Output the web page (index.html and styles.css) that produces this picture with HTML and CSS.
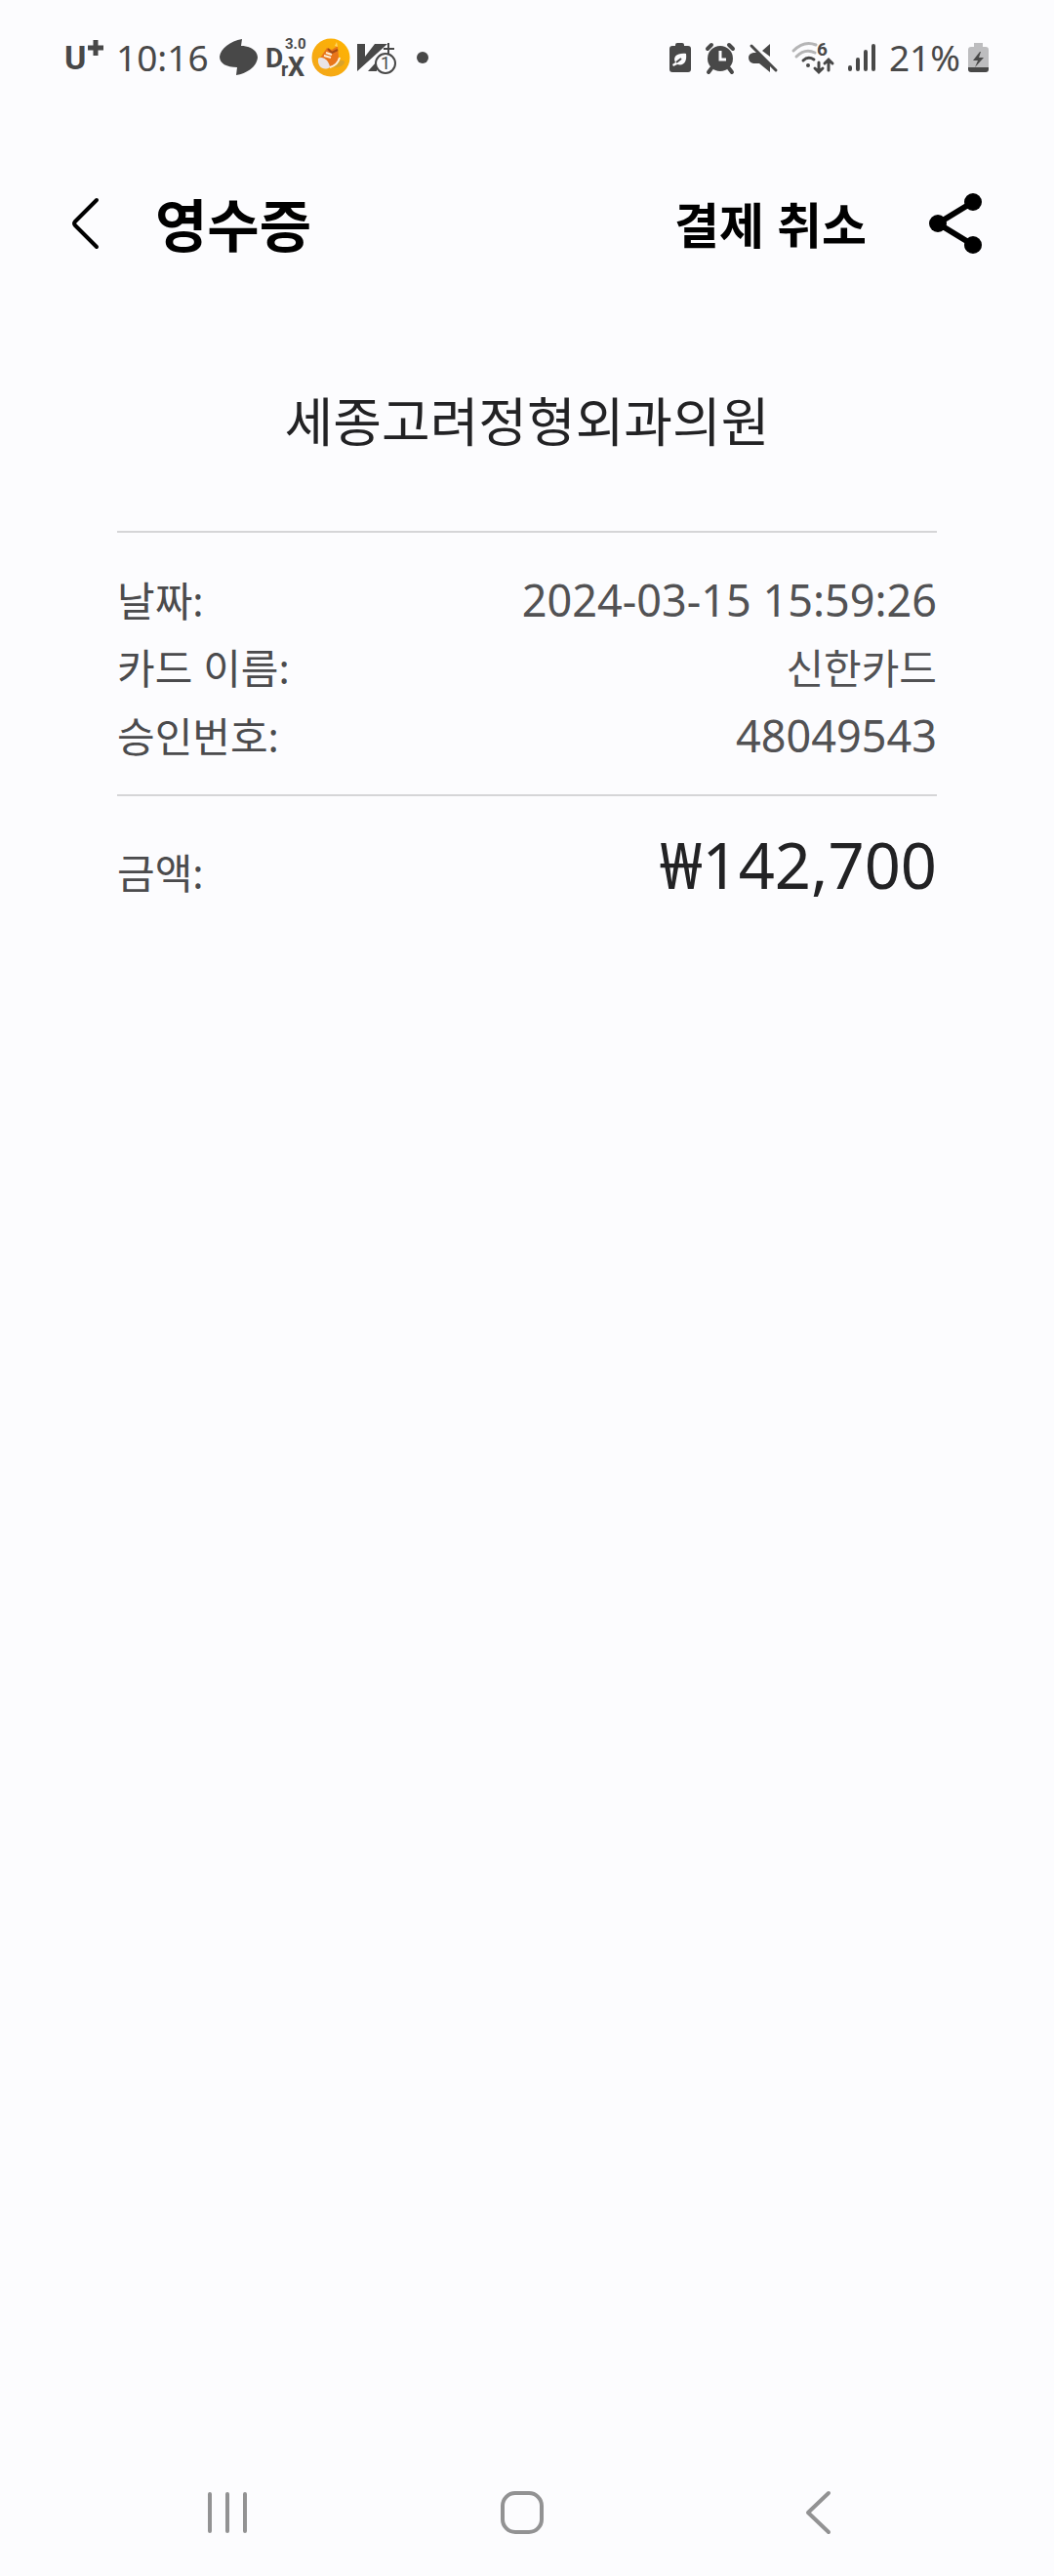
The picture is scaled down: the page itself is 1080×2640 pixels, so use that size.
FILE: index.html
```html
<!DOCTYPE html>
<html lang="ko">
<head>
<meta charset="utf-8">
<meta name="viewport" content="width=device-width, initial-scale=1">
<title>영수증</title>
<link rel="stylesheet" href="styles.css">
</head>
<body>
<div class="screen">
  <div class="status">
    <div class="status-group status-left">
      <svg class="carrier" width="42" height="44" viewBox="0 0 42 44"><text x="0" y="34" font-size="34">U</text><path d="M24 12H40M32 4V20" stroke="#484848" stroke-width="5" fill="none"/></svg>
      <span class="clock">10:16</span>
      <div class="notices">
        <svg width="40" height="40" viewBox="0 0 40 40"><path fill="#484848" d="M23 1 L22 8 C32 8 39 13 39 20 C38 29 29 36 17 38 L18 30 C7 30 0 26 0 19 C1 11 11 3 23 1Z"/></svg>
        <svg width="40" height="40" viewBox="0 0 40 40"><text x="0" y="30" font-size="28">D</text><text x="16" y="39" font-size="20">r</text><text x="23" y="39" font-size="27">X</text><text x="20" y="11" font-size="15">3.0</text></svg>
        <svg width="40" height="40" viewBox="0 0 40 40"><defs><linearGradient id="gold" x1="0" y1="1" x2="1" y2="0"><stop offset="0" stop-color="#f2a51c"/><stop offset="1" stop-color="#ffb400"/></linearGradient></defs><circle cx="20" cy="20" r="19.500" fill="url(#gold)"/><path d="M20 29C24 24 30 21 34 24C34 29 27 31 20 30Z" fill="#d9a32b"/><path d="M16 10L21 12L27 8L28 20C29 24 25 28 19 30L8 22Z" fill="#e8751a"/><path d="M17 11L21 15L27 12" fill="none" stroke="#a44a14" stroke-width="2"/><path d="M7 21C12 18 18 23 19 30C13 34 6 30 7 21Z" fill="#e9e4e6"/><path d="M13 18L20 20M15 15L21 17M19 30C26 28 28 24 29 20" fill="none" stroke="#fff0d8" stroke-width="2"/><path d="M24 8L26 4L27 9" fill="#ffd76a"/></svg>
        <svg width="40" height="40" viewBox="0 0 40 40"><path fill="#484848" d="M0 6H8V19L18 6H31L0 34ZM11 34L20 24V34Z"/><path d="M27 11H38M32 5V17" stroke="#484848" stroke-width="2"/><circle cx="29" cy="26" r="10" fill="#fcfcfe" stroke="#484848" stroke-width="2"/><text class="badge" x="24" y="32" font-size="18">1</text></svg>
      </div>
      <span class="dot"></span>
    </div>
    <div class="status-group status-right">
      <svg width="24" height="32" viewBox="0 0 24 32"><path fill="#484848" d="M7 3Q7 1 9 1H14Q16 1 16 3V4H20Q23 4 23 7V28Q23 31 20 31H4Q1 31 1 28V7Q1 4 4 4H7Z"/><path d="M18 12C9 11 4 15 7 21L4 23L5 25L9 23C16 25 19 20 18 12Z" fill="#fcfcfe"/><path d="M8 21L13 17" stroke="#484848" stroke-width="2"/></svg>
      <svg width="30" height="32" viewBox="0 0 30 32"><path d="M6 27L3 31M24 27L27 31M2 7L6 3M24 3L28 7" stroke="#484848" stroke-width="4" stroke-linecap="round"/><circle cx="15" cy="17" r="13" fill="#484848"/><path d="M15 9V18H21" fill="none" stroke="#fcfcfe" stroke-width="3"/></svg>
      <svg width="30" height="32" viewBox="0 0 30 32"><path fill="#484848" d="M22 2V15L14 9ZM5 11H10L22 22V31L11 22H5Q0 21 0 16Q0 12 5 11Z"/><path d="M3 4L28 29" stroke="#484848" stroke-width="3" stroke-linecap="round"/></svg>
      <svg width="44" height="36" viewBox="0 0 44 36"><g fill="none" stroke-width="3" stroke-linecap="round"><path d="M2 11Q13 0 25 5M5 17Q14 8 24 13" stroke="#b5b5b6"/><path d="M12 21Q17 16 23 20" stroke="#484848"/><path d="M28 23V32M24 29L28 33L32 29M38 31V21M34 24L38 20L42 24" stroke="#484848"/></g><circle cx="17" cy="26" r="2" fill="#484848"/><text x="26" y="16" font-size="19">6</text></svg>
      <svg width="28" height="32" viewBox="0 0 28 32"><path d="M2 26V28M10 18V28M18 10V28M26 4V28" stroke="#484848" stroke-width="4" stroke-linecap="round"/></svg>
      <span class="percent">21%</span>
      <svg width="22" height="32" viewBox="0 0 22 32"><path fill="#bdbdbf" d="M6 1H15V5H18Q21 5 21 8V26H0V8Q0 5 3 5H6Z"/><path fill="#484848" d="M0 26H21V28Q21 31 18 31H3Q0 31 0 28ZM12 10L5 19H10L7 26L16 16H11L13 10Z"/></svg>
    </div>
  </div>

  <header class="appbar">
    <button class="icon-button back" aria-label="뒤로"><svg width="30" height="56" viewBox="0 0 30 56"><path d="M26 4L4 26Q2 28 4 30L26 52" fill="none" stroke="#000" stroke-width="4" stroke-linecap="round"/></svg></button>
    <h1 class="title">영수증</h1>
    <button class="cancel">결제 취소</button>
    <button class="icon-button share" aria-label="공유"><svg width="54" height="62" viewBox="0 0 54 62"><path d="M45 9L9 31L45 53" fill="none" stroke="#000" stroke-width="6"/><g fill="#000"><circle cx="45" cy="9" r="9"/><circle cx="9" cy="31" r="9"/><circle cx="45" cy="53" r="9"/></g></svg></button>
  </header>

  <main class="receipt">
    <h2 class="merchant">세종고려정형외과의원</h2>
    <dl class="details">
      <div class="row"><dt>날짜:</dt><dd>2024-03-15 15:59:26</dd></div>
      <div class="row"><dt>카드 이름:</dt><dd class="hangul">신한카드</dd></div>
      <div class="row"><dt>승인번호:</dt><dd>48049543</dd></div>
    </dl>
    <dl class="total">
      <div class="row"><dt>금액:</dt><dd class="amount">₩142,700</dd></div>
    </dl>
  </main>

  <nav class="navbar">
    <button class="icon-button" aria-label="최근 앱"><svg width="44" height="48" viewBox="0 0 44 48"><path d="M4 5V43M22 5V43M40 5V43" stroke="#929293" stroke-width="4" stroke-linecap="round"/></svg></button>
    <button class="icon-button" aria-label="홈"><svg width="48" height="48" viewBox="0 0 48 48"><rect x="4" y="4" width="40" height="40" rx="13" fill="none" stroke="#929293" stroke-width="4"/></svg></button>
    <button class="icon-button" aria-label="뒤로"><svg width="28" height="48" viewBox="0 0 28 48"><path d="M25 4L4 24L25 44" fill="none" stroke="#929293" stroke-width="4" stroke-linecap="round" stroke-linejoin="round"/></svg></button>
  </nav>
</div>
</body>
</html>
```
FILE: styles.css
```css
* { box-sizing: border-box; }

body {
  margin: 0;
  background: #fcfcfe;
  color: #4b4b4d;
  font-family: "Noto Sans", "Noto Sans CJK KR", sans-serif;
}

svg {
  display: block;
  flex: none;
  overflow: visible;
}

.screen {
  display: flex;
  flex-direction: column;
  min-height: 100vh;
}

.status {
  display: flex;
  justify-content: space-between;
  align-items: center;
  height: 118px;
  padding: 0 66px;
  color: #484848;
}

.status-group { display: flex; align-items: center; }

.status-left { gap: 11px; }

.status-right { gap: 14px; }

.status text {
  fill: #484848;
  font-family: Roboto, "Noto Sans", sans-serif;
  font-weight: 700;
}

.status .badge { font-weight: 400; }

.clock,
.percent {
  font-size: 37px;
  line-height: 48px;
}

.percent { margin-right: -6px; }

.notices { display: flex; gap: 7px; }

.dot {
  width: 12px;
  height: 12px;
  margin-left: 10px;
  border-radius: 50%;
  background: #484848;
}

.icon-button,
.cancel {
  padding: 0;
  border: 0;
  background: none;
  color: #000;
  font-family: inherit;
}

.appbar {
  display: flex;
  align-items: center;
  height: 222px;
  padding: 0 74px 0 73px;
  color: #000;
}

.title {
  flex: 1;
  margin: 0 0 0 56px;
  padding-top: 4px;
  font-size: 58px;
  line-height: 80px;
  font-weight: 700;
}

.cancel {
  margin-right: 64px;
  padding-top: 4px;
  font-size: 50px;
  line-height: 72px;
  font-weight: 700;
}

.receipt {
  flex: 1;
  padding: 52px 120px 0;
}

.merchant {
  margin: 0 0 72px;
  color: #222224;
  font-size: 54px;
  line-height: 80px;
  font-weight: 400;
  text-align: center;
}

.details,
.total {
  margin: 0;
  border-top: 2px solid #d5d5d7;
}

.details { padding: 34px 0 25px; }

.total { padding-top: 26px; }

.row {
  display: flex;
  justify-content: space-between;
  align-items: baseline;
}

.row dt,
.row dd {
  margin: 0;
  font-size: 42px;
  line-height: 69px;
}

.row dd { font-size: 45px; color: #525254; }

.row .hangul { font-size: 42px; }

.row .amount {
  color: #222224;
  font-size: 65px;
  line-height: 88px;
}

.navbar {
  display: grid;
  grid-template-columns: repeat(3, 1fr);
  align-items: center;
  justify-items: center;
  height: 130px;
  padding: 0 91px 0 82px;
}
```
